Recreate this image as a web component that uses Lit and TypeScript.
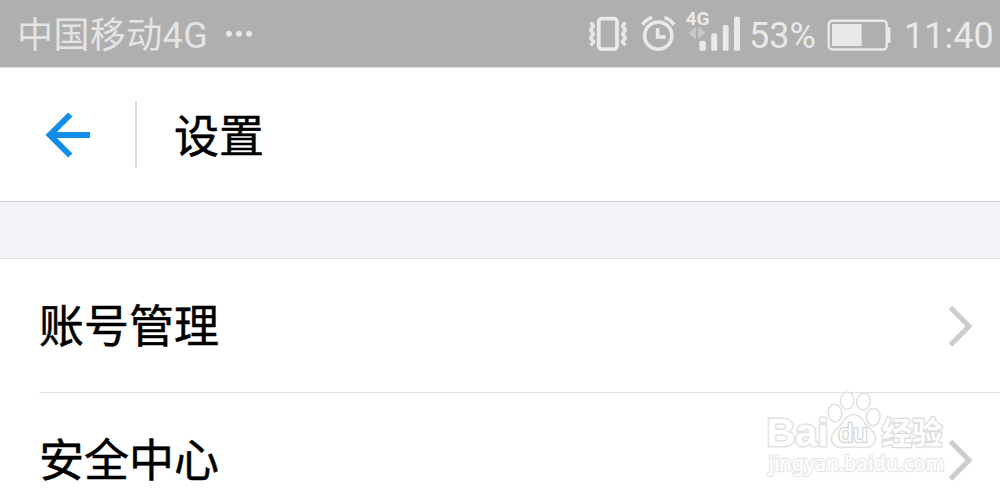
// Import Third-party Dependencies
import { LitElement, css, html, svg } from "lit";
import { customElement, property } from "lit/decorators.js";

@customElement("status-bar")
export class StatusBar extends LitElement {
  @property({ type: String })
  carrier = "";

  @property({ type: String })
  time = "";

  @property({ type: Number })
  battery = 0;

  static styles = css`
    :host {
      display: flex;
      align-items: flex-start;
      box-sizing: border-box;
      height: 67px;
      padding: 0 6px 0 17px;
      background: #afafaf;
      color: #e9e9e9;
      font: 36px/72px Roboto, "Noto Sans CJK SC", sans-serif;
      white-space: nowrap;
    }

    svg {
      display: block;
      flex: none;
      height: 67px;
    }

    .carrier {
      width: 192px;
      color: #e4e4e4;
      letter-spacing: 0.4px;
    }

    .more {
      margin-left: 15px;
    }

    .icons {
      display: flex;
      margin-left: auto;
    }

    .alarm {
      margin-left: 12px;
    }

    .signal {
      margin-left: 9px;
    }

    .percent {
      width: 67px;
      margin-left: 7px;
    }

    .battery {
      margin-left: 11px;
    }

    .time {
      width: 90px;
      margin-left: 13px;
    }

    .network {
      font: bold 18px Roboto, sans-serif;
    }
  `;

  render() {
    return html`
      <span class="carrier">${this.carrier}</span>
      <svg class="more" width="30" viewBox="0 0 30 67" fill="#e9e9e9">
        <circle cx="5" cy="33.7" r="2.9" />
        <circle cx="15" cy="33.7" r="2.9" />
        <circle cx="25" cy="33.7" r="2.9" />
      </svg>
      <div class="icons">
        <svg width="40" viewBox="588 0 40 67" fill="none" stroke="#e9e9e9" stroke-width="3.4">
          <rect x="598.7" y="18.7" width="18.3" height="30.4" rx="3" stroke-width="3.8" />
          <path d="M590.5 22.5l2.5 2.6q1 1.2-.2 2.2l-1.5 1.5q-1.2 1.2 0 2.4l1.5 1.5q1.2 1.2 0 2.4l-1.5 1.5q-1.2 1.2 0 2.4l1.5 1.5q1.2 1 .2 2.2l-2.5 2.5" />
          <path d="M625.5 22.5l-2.5 2.6q-1 1.2.2 2.2l1.5 1.5q1.2 1.2 0 2.4l-1.5 1.5q-1.2 1.2 0 2.4l1.5 1.5q1.2 1.2 0 2.4l-1.5 1.5q-1.2 1-.2 2.2l2.5 2.5" />
        </svg>
        <svg class="alarm" width="37" viewBox="640 0 37 67" fill="none" stroke="#e9e9e9" stroke-width="3.6">
          <circle cx="658.2" cy="35.7" r="13.6" />
          <path d="M657.6 28v9h8" />
          <path d="M642.5 24.6q3.2-4.6 9.6-7.2M674 24.6q-3.2-4.6-9.6-7.2" />
        </svg>
        <svg class="signal" width="56" viewBox="686 0 56 67" fill="#e9e9e9">
          <text class="network" x="685.6" y="25" textLength="24" lengthAdjust="spacingAndGlyphs">4G</text>
          <path fill="#c9c9c9" d="M688.6 33.3l6-5.5h1.3v10.8h-1.3zM705.4 32.8l-6-5.5h-1.2v10.8h1.2z" />
          <rect x="699.4" y="41" width="6.4" height="9.8" rx="1.6" />
          <rect x="711.2" y="33.3" width="6" height="17.5" rx="1.6" />
          <rect x="722.8" y="25" width="5.8" height="25.8" rx="1.6" />
          <rect x="734" y="16.8" width="6" height="34" rx="1.6" />
        </svg>
        <span class="percent">${this.battery}%</span>
        <svg class="battery" width="64" viewBox="827 0 64 67" fill="#e9e9e9">
          <rect x="828.7" y="20.7" width="58" height="28.8" rx="3.5" fill="none" stroke="#e9e9e9" stroke-width="2.4" />
          <rect x="832" y="24" width=${this.battery * 0.56} height="22" />
          <path d="M887 27h1.7q1.8 0 1.8 1.8v12.4q0 1.8-1.8 1.8H887z" />
        </svg>
        <span class="time">${this.time}</span>
      </div>
    `;
  }
}

@customElement("settings-row")
export class SettingsRow extends LitElement {
  @property({ type: String })
  label = "";

  static styles = css`
    :host {
      display: flex;
      flex: none;
      align-items: center;
      justify-content: space-between;
      box-sizing: border-box;
      height: 134px;
      margin-left: 39px;
      padding-right: 26px;
      border-bottom: 1px solid #e2e2e2;
      color: #000;
      font: 45px/66px "Noto Sans CJK SC", sans-serif;
      -webkit-text-stroke: 0.5px #000;
    }

    .label {
      padding-bottom: 3px;
    }

    svg {
      display: block;
    }
  `;

  render() {
    return html`
      <span class="label">${this.label}</span>
      <svg width="26" height="42" viewBox="0 0 26 42">
        <path d="M2.5 2.6L21 21.3 2.5 40" fill="none" stroke="#ccc" stroke-width="5" />
      </svg>
    `;
  }
}

@customElement("app-root")
export class AppRoot extends LitElement {
  rows = ["账号管理", "安全中心"];

  static styles = css`
    :host {
      display: flex;
      flex-direction: column;
      position: relative;
      height: 498px;
      overflow: hidden;
      background: #fff;
    }

    status-bar {
      flex: none;
    }

    .header {
      display: flex;
      flex: none;
      align-items: center;
      box-sizing: border-box;
      height: 135px;
      padding-left: 45px;
      border-top: 1px solid #dedede;
      border-bottom: 1px solid #cdcdcd;
    }

    .header svg {
      display: block;
    }

    .divider {
      width: 2px;
      height: 67px;
      margin-left: 44px;
      background: #dadada;
    }

    .title {
      margin-left: 37px;
      padding-bottom: 1px;
      color: #000;
      font: 45px/66px "Noto Sans CJK SC", sans-serif;
      -webkit-text-stroke: 0.5px #000;
    }

    .gap {
      flex: none;
      box-sizing: border-box;
      height: 57px;
      border-bottom: 1px solid #e0e0e2;
      background: #f4f3f9;
    }

    .watermark {
      position: absolute;
      right: 50px;
      bottom: 18px;
      overflow: visible;
      fill: #fff;
      stroke: #e2e2e2;
      stroke-width: 1.6px;
      stroke-linejoin: round;
    }

    .watermark text {
      paint-order: stroke;
    }

    .brand {
      font: bold 39px "Liberation Sans", sans-serif;
      stroke-width: 3px;
    }

    .brand-cn {
      font: bold 31px "Noto Sans CJK SC", sans-serif;
      stroke: #dcdcdc;
      stroke-width: 2.6px;
    }

    .brand-du {
      font: 25px "Liberation Sans", sans-serif;
      stroke: #d4d4d4;
      stroke-width: 2.6px;
    }

    .site {
      font: 500 22px "Noto Sans", sans-serif;
      stroke: #e6e6e6;
      stroke-width: 2.4px;
    }
  `;

  renderWatermark() {
    return svg`
      <svg class="watermark" width="190" height="90" viewBox="760 390 190 90">
        <ellipse cx="847.3" cy="400.6" rx="6.6" ry="8.6" />
        <ellipse cx="863.5" cy="401.5" rx="6.8" ry="8.4" transform="rotate(12 863.5 401.5)" />
        <ellipse cx="835" cy="413" rx="6.8" ry="8.8" transform="rotate(-8 835 413)" />
        <ellipse cx="873.3" cy="417" rx="6.8" ry="8.6" />
        <text class="brand" x="766.5" y="445.5" textLength="62" lengthAdjust="spacingAndGlyphs">Bai</text>
        <path d="M853.5 414.5c5.5 0 8.5 3.5 11 8 3 5 11 8.5 11 15.5 0 6-4 9.5-9.5 9.5-5 0-8-.5-12.5-.5s-7.5.5-12.5.5c-5.5 0-9.5-3.5-9.5-9.5 0-7 8-10.5 11-15.5 2.5-4.5 5.5-8 11-8z" />
        <text class="brand-du" x="838.5" y="442" textLength="29" lengthAdjust="spacingAndGlyphs">du</text>
        <text class="brand-cn" x="881.5" y="443.5" textLength="61" lengthAdjust="spacingAndGlyphs">经验</text>
        <text class="site" x="768.5" y="470.5" textLength="176" lengthAdjust="spacingAndGlyphs">jingyan.baidu.com</text>
      </svg>
    `;
  }

  render() {
    return html`
      <status-bar carrier="中国移动4G" time="11:40" battery="53"></status-bar>
      <div class="header">
        <svg width="46" height="46" viewBox="0 0 46 46" fill="none" stroke="#108ee9">
          <path d="M25.3 2.5L4.8 23l20.5 20.5M5 23h40" stroke-width="6" />
        </svg>
        <div class="divider"></div>
        <span class="title">设置</span>
      </div>
      <div class="gap"></div>
      ${this.rows.map((label) => html`<settings-row label=${label}></settings-row>`)}
      ${this.renderWatermark()}
    `;
  }
}
